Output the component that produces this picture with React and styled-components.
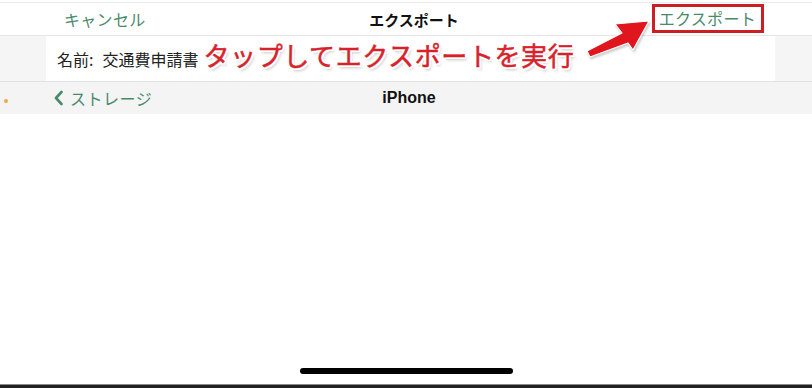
import styled, { createGlobalStyle } from "styled-components";

const tint = "#4a8a6c";
const annotationRed = "#d8222b";

const Global = createGlobalStyle`
  html, body { margin: 0; padding: 0; background: #fff; }
  body {
    font-family: "Noto Sans CJK JP", "Noto Sans", "Liberation Sans", sans-serif;
    -webkit-font-smoothing: antialiased;
  }
`;

const Page = styled.div`
  position: relative;
  width: 812px;
  height: 388px;
  display: flex;
  flex-direction: column;
  overflow: hidden;
  background: #fff;
`;

const NavBar = styled.div`
  margin-top: 2px;
  height: 32px;
  border-top: 1px solid #ececec;
  border-bottom: 1px solid #e6e6e6;
  display: grid;
  grid-template-columns: 1fr auto 1fr;
  align-items: center;
  padding: 0 48px 0 64px;
`;

const NavButton = styled.span`
  font-size: 16px;
  color: ${tint};
  letter-spacing: 0.3px;
  justify-self: ${(p) => (p.$right ? "end" : "start")};
`;

const NavTitle = styled.span`
  font-size: 15px;
  font-weight: 700;
  color: #111;
`;

const Highlight = styled.span`
  display: inline-block;
  padding: 3px 5px 3px 4px;
  margin-top: -4px;
  border: 3px solid #cc1f24;
  line-height: 17px;
`;

const NameRow = styled.div`
  height: 45px;
  display: grid;
  grid-template-columns: 46px 1fr 37px;
  border-bottom: 1px solid #e2e2e2;
`;

const Gutter = styled.div`
  background: #f5f5f5;
`;

const NameCell = styled.div`
  background: #fff;
  display: flex;
  align-items: center;
  padding-left: 11px;
`;

const NameLabel = styled.span`
  font-size: 16px;
  color: #222;
`;

const NameValue = styled(NameLabel)`
  margin-left: 9px;
  margin-right: 5px;
`;

const Annotation = styled.span`
  font-size: 26px;
  font-weight: 400;
  color: ${annotationRed};
  letter-spacing: 0.6px;
  margin-top: -9px;
  -webkit-text-stroke: 0.5px ${annotationRed};
  text-shadow:
    2px 0 0 #fff, -2px 0 0 #fff, 0 2px 0 #fff, 0 -2px 0 #fff,
    1.5px 1.5px 0 #fff, -1.5px -1.5px 0 #fff, 1.5px -1.5px 0 #fff, -1.5px 1.5px 0 #fff,
    2px 3px 3px rgba(0, 0, 0, 0.25);
`;

const Arrow = styled.svg`
  position: absolute;
  left: 584px;
  top: 16px;
  z-index: 2;
  filter: drop-shadow(1px 2px 1px rgba(0, 0, 0, 0.2));
`;

const BrowserBar = styled.div`
  position: relative;
  height: 32px;
  background: #f4f4f4;
  display: grid;
  grid-template-columns: 1fr auto 1fr;
  align-items: center;
  padding: 0 48px 0 54px;
`;

const Dot = styled.span`
  position: absolute;
  left: 4px;
  top: 17px;
  width: 4px;
  height: 4px;
  border-radius: 50%;
  background: #f0a64a;
`;

const Back = styled.span`
  display: flex;
  align-items: center;
  gap: 7px;
  font-size: 16px;
  color: ${tint};
  letter-spacing: 0.5px;
`;

const Location = styled.span`
  font-family: "Liberation Sans", "Noto Sans", sans-serif;
  font-size: 16px;
  font-weight: 700;
  color: #111;
`;

const Body = styled.div`
  flex: 1;
  display: flex;
  align-items: flex-end;
  justify-content: center;
  padding-bottom: 10px;
`;

const HomeIndicator = styled.div`
  width: 213px;
  height: 6px;
  border-radius: 3px;
  background: #000;
`;

const BottomEdge = styled.div`
  height: 3px;
  background: #222;
  border-top: 1px solid #8a8a8a;
`;

export default function App() {
  return (
    <>
      <Global />
      <Page>
        <NavBar>
          <NavButton>キャンセル</NavButton>
          <NavTitle>エクスポート</NavTitle>
          <NavButton $right>
            <Highlight>エクスポート</Highlight>
          </NavButton>
        </NavBar>
        <NameRow>
          <Gutter />
          <NameCell>
            <NameLabel>名前:</NameLabel>
            <NameValue>交通費申請書</NameValue>
            <Annotation>タップしてエクスポートを実行</Annotation>
          </NameCell>
          <Gutter />
        </NameRow>
        <BrowserBar>
          <Dot />
          <Back>
            <svg width="9" height="16" viewBox="0 0 9 16">
              <path
                d="M7.5 2 L2 8 L7.5 14"
                fill="none"
                stroke={tint}
                strokeWidth="2.6"
                strokeLinecap="round"
                strokeLinejoin="round"
              />
            </svg>
            ストレージ
          </Back>
          <Location>iPhone</Location>
          <span />
        </BrowserBar>
        <Body>
          <HomeIndicator />
        </Body>
        <BottomEdge />
        <Arrow width="70" height="44" viewBox="0 0 70 44">
          <polygon
            points="3,35 38,17 31,8 65,5 49,34 44,27 6,41"
            fill="#e0151d"
            stroke="#fff"
            strokeWidth="1.2"
            strokeLinejoin="round"
          />
        </Arrow>
      </Page>
    </>
  );
}
